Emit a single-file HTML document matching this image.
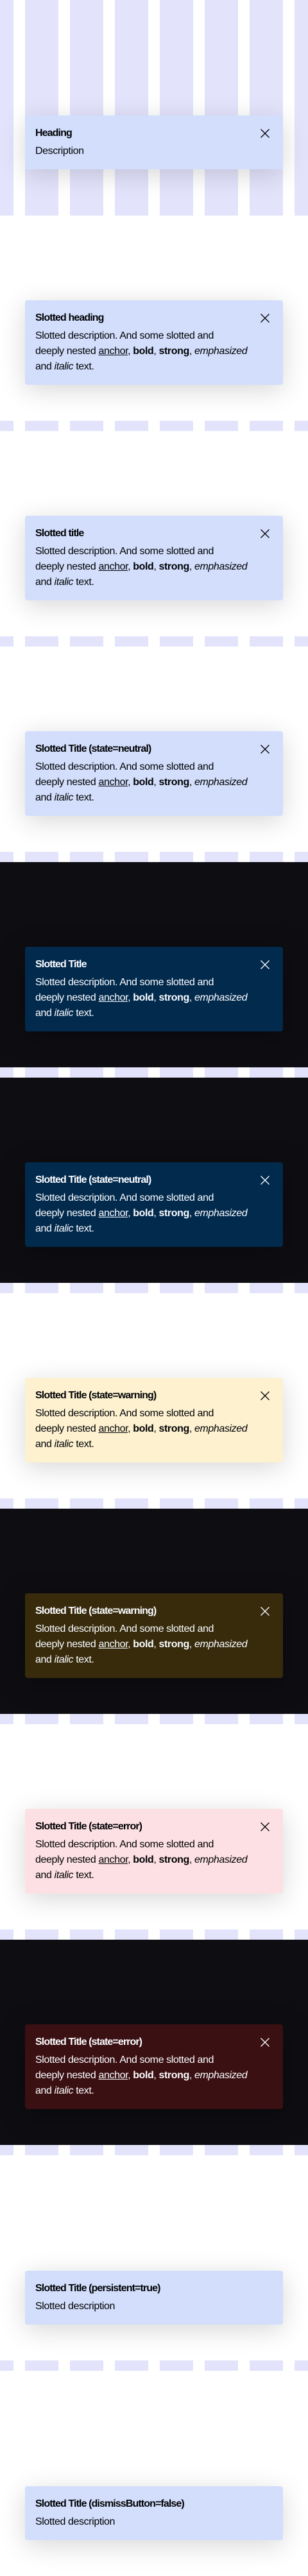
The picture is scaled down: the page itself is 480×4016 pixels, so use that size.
<!DOCTYPE html>
<html><head><meta charset="utf-8">
<style>
html,body{margin:0;padding:0}
body{width:480px;height:4016px;position:relative;overflow:hidden;background:#fff;font-family:"Liberation Sans",sans-serif}
.stripes{position:absolute;left:0;width:480px;background:linear-gradient(90deg,#e3e3fc 0 21px,#fff 21px 39px,#e3e3fc 39px 91px,#fff 91px 109px,#e3e3fc 109px 161px,#fff 161px 179px,#e3e3fc 179px 231px,#fff 231px 249px,#e3e3fc 249px 301px,#fff 301px 319px,#e3e3fc 319px 371px,#fff 371px 389px,#e3e3fc 389px 441px,#fff 441px 459px,#e3e3fc 459px 480px);}
.dark{position:absolute;left:0;width:480px;height:320px;background:#0e0d12}
.n{position:absolute;left:39px;width:402px;box-sizing:border-box;padding:16px;border-radius:4px;background:#d2defb;color:#010205;box-shadow:0 8px 40px rgba(0,0,0,.16)}
.n h4{margin:0;font-size:16px;line-height:24px;font-weight:bold;letter-spacing:-0.9px;white-space:nowrap}
.n p{margin:4px 0 0;font-size:16px;line-height:24px;letter-spacing:-0.4px;white-space:nowrap}
.n a{color:inherit;text-decoration:underline}
.n i,.n em{font-style:italic}
.n svg{position:absolute;right:21px;top:21px}
.d{color:#fbfcff;box-shadow:0 8px 40px rgba(0,0,0,.35)}
.bd{background:#022a4d}
.wl{background:#fdf1d0}
.wd{background:#372b0c}
.el{background:#fde0e3}
.ed{background:#3a1012}
</style></head><body>
<div class="stripes" style="top:0;height:336px"></div>
<div class="stripes" style="top:656px;height:16px"></div>
<div class="stripes" style="top:992px;height:16px"></div>
<div class="stripes" style="top:1328px;height:16px"></div>
<div class="dark" style="top:1344px"></div>
<div class="stripes" style="top:1664px;height:16px"></div>
<div class="dark" style="top:1680px"></div>
<div class="stripes" style="top:2000px;height:16px"></div>
<div class="stripes" style="top:2336px;height:16px"></div>
<div class="dark" style="top:2352px"></div>
<div class="stripes" style="top:2672px;height:16px"></div>
<div class="stripes" style="top:3008px;height:16px"></div>
<div class="dark" style="top:3024px"></div>
<div class="stripes" style="top:3344px;height:16px"></div>
<div class="stripes" style="top:3680px;height:16px"></div>

<div class="n" style="top:180px;border-radius:0"><h4>Heading</h4><p>Description</p>
<svg width="14" height="14" viewBox="0 0 14 14"><path d="M0.5 0.5L13.5 13.5M13.5 0.5L0.5 13.5" stroke="currentColor" stroke-width="1.3"/></svg></div>

<div class="n" style="top:468px"><h4>Slotted heading</h4><p>Slotted description. And some slotted and<br>deeply nested <a>anchor</a>, <b>bold</b>, <strong>strong</strong>, <em>emphasized</em><br>and <i>italic</i> text.</p>
<svg width="14" height="14" viewBox="0 0 14 14"><path d="M0.5 0.5L13.5 13.5M13.5 0.5L0.5 13.5" stroke="currentColor" stroke-width="1.3"/></svg></div>

<div class="n" style="top:804px"><h4>Slotted title</h4><p>Slotted description. And some slotted and<br>deeply nested <a>anchor</a>, <b>bold</b>, <strong>strong</strong>, <em>emphasized</em><br>and <i>italic</i> text.</p>
<svg width="14" height="14" viewBox="0 0 14 14"><path d="M0.5 0.5L13.5 13.5M13.5 0.5L0.5 13.5" stroke="currentColor" stroke-width="1.3"/></svg></div>

<div class="n" style="top:1140px"><h4>Slotted Title (state=neutral)</h4><p>Slotted description. And some slotted and<br>deeply nested <a>anchor</a>, <b>bold</b>, <strong>strong</strong>, <em>emphasized</em><br>and <i>italic</i> text.</p>
<svg width="14" height="14" viewBox="0 0 14 14"><path d="M0.5 0.5L13.5 13.5M13.5 0.5L0.5 13.5" stroke="currentColor" stroke-width="1.3"/></svg></div>

<div class="n d bd" style="top:1476px"><h4>Slotted Title</h4><p>Slotted description. And some slotted and<br>deeply nested <a>anchor</a>, <b>bold</b>, <strong>strong</strong>, <em>emphasized</em><br>and <i>italic</i> text.</p>
<svg width="14" height="14" viewBox="0 0 14 14"><path d="M0.5 0.5L13.5 13.5M13.5 0.5L0.5 13.5" stroke="currentColor" stroke-width="1.3"/></svg></div>

<div class="n d bd" style="top:1812px"><h4>Slotted Title (state=neutral)</h4><p>Slotted description. And some slotted and<br>deeply nested <a>anchor</a>, <b>bold</b>, <strong>strong</strong>, <em>emphasized</em><br>and <i>italic</i> text.</p>
<svg width="14" height="14" viewBox="0 0 14 14"><path d="M0.5 0.5L13.5 13.5M13.5 0.5L0.5 13.5" stroke="currentColor" stroke-width="1.3"/></svg></div>

<div class="n wl" style="top:2148px"><h4>Slotted Title (state=warning)</h4><p>Slotted description. And some slotted and<br>deeply nested <a>anchor</a>, <b>bold</b>, <strong>strong</strong>, <em>emphasized</em><br>and <i>italic</i> text.</p>
<svg width="14" height="14" viewBox="0 0 14 14"><path d="M0.5 0.5L13.5 13.5M13.5 0.5L0.5 13.5" stroke="currentColor" stroke-width="1.3"/></svg></div>

<div class="n d wd" style="top:2484px"><h4>Slotted Title (state=warning)</h4><p>Slotted description. And some slotted and<br>deeply nested <a>anchor</a>, <b>bold</b>, <strong>strong</strong>, <em>emphasized</em><br>and <i>italic</i> text.</p>
<svg width="14" height="14" viewBox="0 0 14 14"><path d="M0.5 0.5L13.5 13.5M13.5 0.5L0.5 13.5" stroke="currentColor" stroke-width="1.3"/></svg></div>

<div class="n el" style="top:2820px"><h4>Slotted Title (state=error)</h4><p>Slotted description. And some slotted and<br>deeply nested <a>anchor</a>, <b>bold</b>, <strong>strong</strong>, <em>emphasized</em><br>and <i>italic</i> text.</p>
<svg width="14" height="14" viewBox="0 0 14 14"><path d="M0.5 0.5L13.5 13.5M13.5 0.5L0.5 13.5" stroke="currentColor" stroke-width="1.3"/></svg></div>

<div class="n d ed" style="top:3156px"><h4>Slotted Title (state=error)</h4><p>Slotted description. And some slotted and<br>deeply nested <a>anchor</a>, <b>bold</b>, <strong>strong</strong>, <em>emphasized</em><br>and <i>italic</i> text.</p>
<svg width="14" height="14" viewBox="0 0 14 14"><path d="M0.5 0.5L13.5 13.5M13.5 0.5L0.5 13.5" stroke="currentColor" stroke-width="1.3"/></svg></div>

<div class="n" style="top:3540px"><h4>Slotted Title (persistent=true)</h4><p>Slotted description</p></div>

<div class="n" style="top:3876px"><h4>Slotted Title (dismissButton=false)</h4><p>Slotted description</p></div>
</body></html>
